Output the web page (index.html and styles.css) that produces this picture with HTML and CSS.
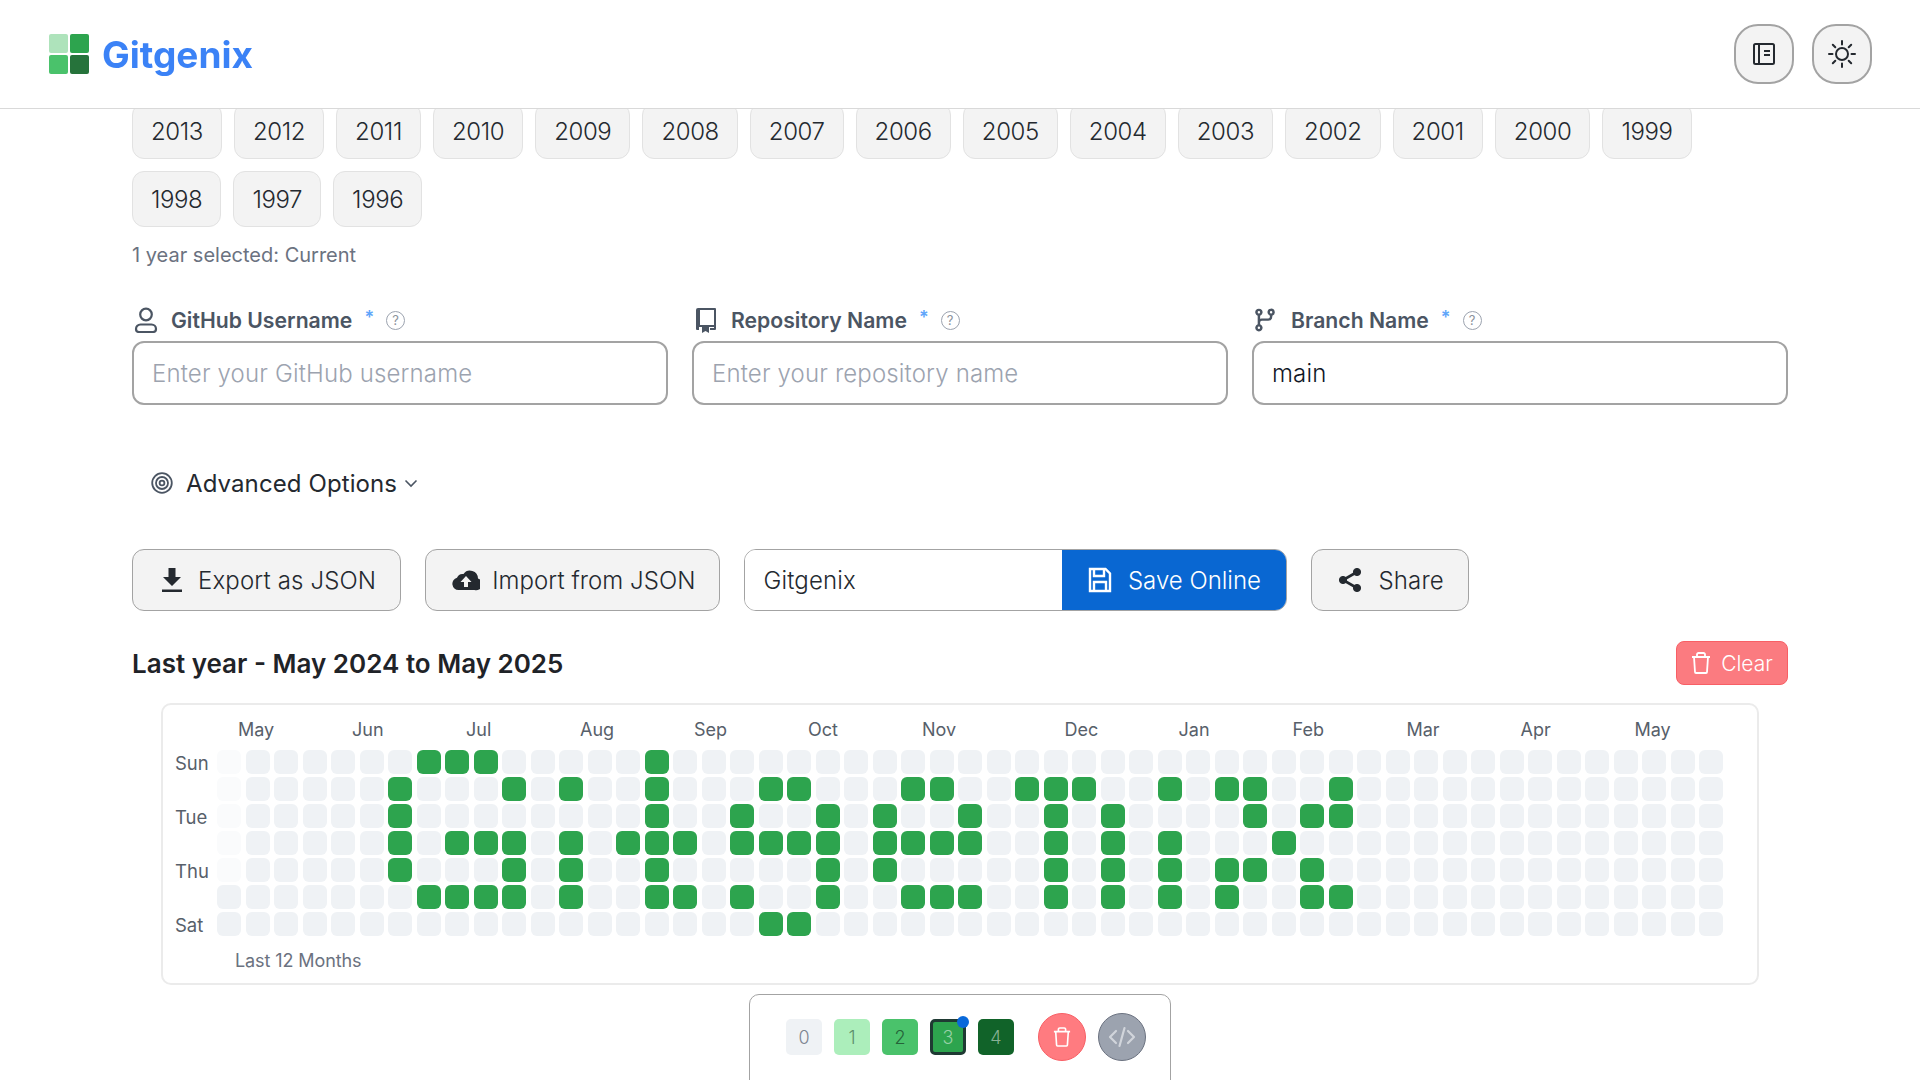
FILE: index.html
```html
<!DOCTYPE html>
<html lang="en">
<head>
  <meta charset="UTF-8" />
  <title>Gitgenix</title>
  <meta name="viewport" content="width=device-width, initial-scale=1.0" />
  <link rel="stylesheet" href="styles.css">
</head>
<body>

  <header class="topbar">
    <div class="brand">
      <div class="brand-mark">
        <span class="mark-a"></span><span class="mark-b"></span><span class="mark-c"></span><span class="mark-d"></span>
      </div>
      <span class="brand-name">Gitgenix</span>
    </div>
    <div class="topbar-actions">
      <button class="round-btn" aria-label="Guides">
        <svg width="24" height="24" viewBox="0 0 24 24" fill="none" stroke="#24292f" stroke-width="2"><rect x="2" y="2" width="20" height="20" rx="1.5"/><path d="M7 2v20M12 9h6M12 13h6"/></svg>
      </button>
      <button class="round-btn" aria-label="Theme">
        <svg width="28" height="28" viewBox="0 0 28 28" fill="none" stroke="#24292f" stroke-width="2" stroke-linecap="round"><circle cx="14" cy="14" r="6"/><path d="M14 1v3.5M14 23.5V27M1 14h3.5M23.5 14H27M4.8 4.8l2.5 2.5M20.7 20.7l2.5 2.5M4.8 23.2l2.5-2.5M20.7 7.3l2.5-2.5"/></svg>
      </button>
    </div>
  </header>

  <main class="page">
    <div class="years">
      <button class="year">2013</button>
      <button class="year">2012</button>
      <button class="year">2011</button>
      <button class="year">2010</button>
      <button class="year">2009</button>
      <button class="year">2008</button>
      <button class="year">2007</button>
      <button class="year">2006</button>
      <button class="year">2005</button>
      <button class="year">2004</button>
      <button class="year">2003</button>
      <button class="year">2002</button>
      <button class="year">2001</button>
      <button class="year">2000</button>
      <button class="year">1999</button>
      <button class="year">1998</button>
      <button class="year">1997</button>
      <button class="year">1996</button>
    </div>
    <p class="year-count">1 year selected: Current</p>

    <div class="fields">
      <div class="field">
        <label class="field-label">
          <svg class="field-icon" width="24" height="26" viewBox="0 0 24 26" fill="none" stroke="#4b5563" stroke-width="2.2"><circle cx="12" cy="7.5" r="5.8"/><path d="M2 22a4.500 4.500 0 0 1 4.500-4.500h11A4.500 4.500 0 0 1 22 22a3 3 0 0 1-3 3H5a3 3 0 0 1-3-3z"/></svg>
          <span>GitHub Username</span>
          <span class="req">*</span>
          <span class="help">?</span>
        </label>
        <input class="text-input" type="text" placeholder="Enter your GitHub username" />
      </div>
      <div class="field">
        <label class="field-label">
          <svg class="field-icon" width="24" height="26" viewBox="0 0 24 26" fill="none"><path d="M4 1h17a1 1 0 0 1 1 1v20a1 1 0 0 1-1 1h-5v-2h4V3H6v15h15v2H5v3H3a1 1 0 0 1-1-1V3a2 2 0 0 1 2-2z" fill="#4b5563"/><path d="M3 5h1.600v2H3zM3 9h1.600v2H3zM3 13h1.600v2H3z" fill="#4b5563"/><path d="M8 20h7v6l-3.500-2L8 26z" fill="#4b5563"/></svg>
          <span>Repository Name</span>
          <span class="req">*</span>
          <span class="help">?</span>
        </label>
        <input class="text-input" type="text" placeholder="Enter your repository name" />
      </div>
      <div class="field">
        <label class="field-label">
          <svg class="field-icon branch-icon" width="26" height="26" viewBox="0 0 16 16" fill="#4b5563"><path d="M9.500 3.250a2.250 2.250 0 1 1 3 2.122V6A2.500 2.500 0 0 1 10 8.500H6a1 1 0 0 0-1 1v1.128a2.251 2.251 0 1 1-1.500 0V5.372a2.250 2.250 0 1 1 1.500 0v1.836A2.493 2.493 0 0 1 6 7h4a1 1 0 0 0 1-1v-.628A2.250 2.250 0 0 1 9.500 3.250Zm-6 0a.75.75 0 1 0 1.500 0 .75.75 0 0 0-1.500 0Zm8.250-.75a.75.75 0 1 0 0 1.500.75.75 0 0 0 0-1.500ZM4.250 12a.75.75 0 1 0 0 1.500.75.75 0 0 0 0-1.500Z"/></svg>
          <span>Branch Name</span>
          <span class="req">*</span>
          <span class="help">?</span>
        </label>
        <input class="text-input" type="text" value="main" />
      </div>
    </div>

    <div class="advanced">
      <svg width="22" height="22" viewBox="0 0 22 22" fill="none" stroke="#4b5563" stroke-width="1.800"><circle cx="11" cy="11" r="9.800"/><circle cx="11" cy="11" r="6"/><circle cx="11" cy="11" r="2.400"/></svg>
      <span class="advanced-text">Advanced Options</span>
      <svg width="14" height="14" viewBox="0 0 14 14" fill="none" stroke="#4b5563" stroke-width="1.600"><path d="M1.500 4.500L7 10l5.500-5.500"/></svg>
    </div>

    <div class="actions">
      <button class="action-btn">
        <svg width="20" height="26" viewBox="0 0 20 26" fill="#24292f"><path d="M6.500 1h7v9H19l-9 9-9-9h5.500z"/><rect y="22.500" width="20" height="2.500"/></svg>
        Export as JSON
      </button>
      <button class="action-btn import-btn">
        <svg width="28" height="22" viewBox="0 0 28 22"><path d="M6.500 21A6.200 6.200 0 0 1 5 8.800 6 6 0 0 1 11.500 5 8 8 0 0 1 26 9.500 6 6 0 0 1 22.500 21z" fill="#24292f"/><path d="M14 7l5.500 6H16v5h-4v-5H8.500z" fill="#f3f3f3"/></svg>
        Import from JSON
      </button>
      <div class="save-group">
        <input class="save-input" type="text" value="Gitgenix" />
        <button class="save-btn">
          <svg width="24" height="26" viewBox="0 0 24 26" fill="none" stroke="#fff" stroke-width="2.400"><path d="M2 2h15.500L22 6.500V24H2z"/><path d="M6 2v7h10V2M6 24v-9h12v9"/></svg>
          Save Online
        </button>
      </div>
      <button class="action-btn share-btn">
        <svg width="24" height="26" viewBox="0 0 24 26" fill="#24292f" stroke="#24292f"><path d="M19 5L5 13l14 8" fill="none" stroke-width="2.600"/><circle cx="19" cy="5" r="3.600"/><circle cx="5" cy="13" r="3.600"/><circle cx="19" cy="21" r="3.600"/></svg>
        Share
      </button>
    </div>

    <div class="graph-head">
      <h2 class="graph-title">Last year - May 2024 to May 2025</h2>
      <button class="clear-btn">
        <svg width="20" height="22" viewBox="0 0 20 22" fill="none" stroke="#fff" stroke-width="1.800" stroke-linejoin="round"><path d="M1 5h18M6 5V2.500A1.500 1.500 0 0 1 7.500 1h5A1.500 1.500 0 0 1 14 2.500V5M3 5l1 15a1 1 0 0 0 1 1h10a1 1 0 0 0 1-1l1-15"/></svg>
        Clear
      </button>
    </div>

    <section class="graph-card">
      <div class="graph-grid" id="months"></div>
      <div class="graph-body">
        <div class="days">
          <span>Sun</span><span></span><span>Tue</span><span></span><span>Thu</span><span></span><span>Sat</span>
        </div>
        <div class="graph-grid cells" id="cells"></div>
      </div>
      <p class="graph-note">Last 12 Months</p>
    </section>

    <section class="palette">
      <button class="chip chip-0">0</button>
      <button class="chip chip-1">1</button>
      <button class="chip chip-2">2</button>
      <button class="chip chip-3 active">3</button>
      <button class="chip chip-4">4</button>
      <button class="tool-btn tool-erase" aria-label="Erase">
        <svg width="18" height="20" viewBox="0 0 20 22" fill="none" stroke="#fff" stroke-width="1.800" stroke-linejoin="round"><path d="M1 5h18M6 5V2.500A1.500 1.500 0 0 1 7.500 1h5A1.500 1.500 0 0 1 14 2.500V5M3 5l1 15a1 1 0 0 0 1 1h10a1 1 0 0 0 1-1l1-15"/></svg>
      </button>
      <button class="tool-btn tool-code" aria-label="Code">
        <svg width="28" height="22" viewBox="0 0 28 22" fill="none" stroke="#d1d5db" stroke-width="2.200" stroke-linecap="round" stroke-linejoin="round"><path d="M8 5l-6 6 6 6M20 5l6 6-6 6M16.500 2l-5 18"/></svg>
      </button>
    </section>
  </main>

  <script src="script.js"></script>
</body>
</html>
```

FILE: styles.css
```css
* {
  box-sizing: border-box;
}

html, body {
  height: 1080px;
  overflow: hidden;
}

body {
  margin: 0;
  background-color: #fff;
  color: #24292f;
  font-family: Inter, "Noto Sans", sans-serif;
  font-size: 24px;
}

button, input {
  font-family: inherit;
  font-size: inherit;
  font-weight: 350;
  color: inherit;
}

/* top bar sits over the scrolled page */
.topbar {
  position: fixed;
  top: 0;
  left: 0;
  right: 0;
  z-index: 10;
  height: 109px;
  padding: 0 48px 0 49px;
  display: flex;
  justify-content: space-between;
  align-items: center;
  background-color: rgba(255, 255, 255, 0.96);
  backdrop-filter: blur(10px);
  border-bottom: 1px solid #d9d9d9;
}

.brand {
  display: flex;
  align-items: center;
  gap: 13px;
}

.brand-mark {
  display: grid;
  grid-template-columns: 19px 19px;
  grid-template-rows: 19px 19px;
  gap: 2px;
}

.brand-mark span {
  border-radius: 2px;
}

.mark-a { background-color: #aee3bb; }
.mark-b { background-color: #2da44e; }
.mark-c { background-color: #4ac26b; }
.mark-d { background-color: #26733b; }

.brand-name {
  font-size: 37px;
  font-weight: 700;
  color: #3b82f6;
}

.topbar-actions {
  display: flex;
  gap: 18px;
}

.round-btn {
  width: 60px;
  height: 60px;
  padding: 0;
  display: flex;
  align-items: center;
  justify-content: center;
  background-color: #f3f3f3;
  border: 2px solid #a3a3a3;
  border-radius: 24px;
}

.page {
  padding: 103px 132px 0;
}

.years {
  display: flex;
  flex-wrap: wrap;
  gap: 12px;
}

.year {
  height: 56px;
  padding: 0 18px;
  background-color: #f3f3f3;
  border: 1px solid #e2e2e2;
  border-radius: 12px;
  letter-spacing: -0.4px;
}

.year-count {
  margin: 16px 0 0;
  font-size: 20px;
  line-height: 24px;
  color: #6b7280;
}

.fields {
  margin-top: 40px;
  display: flex;
  gap: 24px;
}

.field {
  flex: 1;
}

.field-label {
  height: 26px;
  margin-bottom: 8px;
  display: flex;
  align-items: center;
  font-size: 21.2px;
  font-weight: 600;
  color: #4b5563;
}

.field-icon {
  margin: 0 13px 0 2px;
}

.branch-icon {
  margin: 0 13px 0 0;
}

.req {
  margin-left: 12px;
  font-size: 18px;
  align-self: flex-start;
  color: #60a5fa;
}

.help {
  width: 19px;
  height: 19px;
  margin-left: 12px;
  display: flex;
  align-items: center;
  justify-content: center;
  font-size: 13px;
  font-weight: 400;
  color: #8b929c;
  border: 1.5px solid #9ca3af;
  border-radius: 50%;
}

.text-input {
  width: 100%;
  height: 64px;
  padding: 0 18px;
  color: #111827;
  background-color: #fff;
  border: 2px solid #a3a3a3;
  border-radius: 12px;
  letter-spacing: 0.15px;
}

.text-input::placeholder {
  color: #9ca3af;
}

.advanced {
  margin-top: 62px;
  padding-left: 19px;
  height: 32px;
  display: flex;
  align-items: center;
  gap: 13px;
}

.advanced-text {
  margin-right: -6px;
  letter-spacing: 0.1px;
}

.actions {
  margin-top: 50px;
  display: flex;
  gap: 24px;
}

.action-btn {
  height: 62px;
  padding: 0 24px 0 29px;
  display: flex;
  align-items: center;
  gap: 16px;
  background-color: #f3f3f3;
  border: 1px solid #a3a3a3;
  border-radius: 12px;
  letter-spacing: 0.15px;
}

.import-btn {
  padding-left: 26px;
  gap: 12px;
  letter-spacing: 0.05px;
}

.share-btn {
  padding-left: 26px;
}

.save-group {
  display: flex;
  height: 62px;
  width: 543px;
  border: 1px solid #a3a3a3;
  border-radius: 12px;
  overflow: hidden;
}

.save-input {
  flex: 1;
  min-width: 0;
  padding: 0 18px;
  border: 0;
  background-color: #fff;
  letter-spacing: 0.15px;
}

.save-btn {
  width: 224px;
  display: flex;
  align-items: center;
  justify-content: center;
  gap: 16px;
  color: #fff;
  background-color: #0967d2;
  border: 0;
}

.graph-head {
  margin-top: 30px;
  height: 44px;
  display: flex;
  justify-content: space-between;
  align-items: center;
}

.graph-title {
  margin: 0;
  font-size: 26px;
  font-weight: 600;
  color: #1f2328;
}

.clear-btn {
  width: 112px;
  height: 44px;
  padding: 0;
  display: flex;
  align-items: center;
  justify-content: center;
  gap: 10px;
  font-size: 21px;
  color: #fff;
  background-color: #fb7b80;
  border: 1px solid #f85f65;
  border-radius: 8px;
}

.graph-card {
  margin: 18px 29px 0;
  height: 282px;
  padding: 13px 12px 0;
  background-color: #fff;
  border: 2px solid #ebebeb;
  border-radius: 10px;
}

.graph-grid {
  margin-left: 42px;
  display: grid;
  grid-template-columns: repeat(53, 24px);
  column-gap: 4.5px;
  font-size: 18px;
  line-height: 24px;
  color: #57606a;
}

.graph-grid .month {
  padding-left: 21px;
  white-space: nowrap;
}

.graph-body {
  margin-top: 8px;
  display: flex;
}

.graph-body .graph-grid {
  margin-left: 0;
}

.days {
  width: 42px;
  margin-top: 1px;
  display: grid;
  grid-template-rows: repeat(7, 24px);
  row-gap: 3px;
  font-size: 18.5px;
  line-height: 24px;
  color: #57606a;
}

.cells {
  grid-template-rows: repeat(7, 24px);
  grid-auto-flow: column;
  row-gap: 3px;
}

.cell {
  border-radius: 6px;
  background-color: #eff2f5;
}

.cell.empty {
  background-color: #fafbfc;
}

.cell.on {
  background-color: #2da44e;
}

.graph-note {
  margin: 12px 0 0 60px;
  font-size: 18px;
  line-height: 24px;
  letter-spacing: -0.1px;
  color: #6b7280;
}

.palette {
  width: 422px;
  height: 120px;
  margin: 9px auto 0;
  padding: 18px 0 0 36px;
  display: flex;
  align-items: flex-start;
  background-color: #fff;
  border: 1px solid #a3a3a3;
  border-radius: 10px;
}

.chip {
  position: relative;
  width: 36px;
  height: 36px;
  margin: 6px 12px 0 0;
  padding: 0;
  font-size: 18px;
  border: 0;
  border-radius: 5px;
}

.chip-0 { background-color: #eff2f5; color: #7d8590; }
.chip-1 { background-color: #aceebb; color: #5c8f6b; }
.chip-2 { background-color: #4ac26b; color: #256339; }
.chip-3 { background-color: #2da44e; color: #97d1a6; }
.chip-4 { background-color: #116329; color: #88b194; margin-right: 24px; }

.chip.active {
  border: 3px solid #1f3a33;
}

/* blue dot on the picked level */
.chip.active::after {
  content: "";
  position: absolute;
  top: -6px;
  right: -6px;
  width: 12px;
  height: 12px;
  background-color: #0969da;
  border-radius: 50%;
}

.tool-btn {
  width: 48px;
  height: 48px;
  margin-right: 12px;
  padding: 0;
  display: flex;
  align-items: center;
  justify-content: center;
  border-radius: 50%;
}

.tool-erase {
  background-color: #ff7b80;
  border: 1px solid #f85f65;
}

.tool-code {
  background-color: #9ca3af;
  border: 1px solid #6b7280;
}
```

FILE: script.js
```js
// Columns that are lit, one list per weekday (Sun to Sat)
const lit = [
  [7, 8, 9, 15],
  [6, 10, 12, 15, 19, 20, 24, 25, 28, 29, 30, 33, 35, 36, 39],
  [6, 15, 18, 21, 23, 26, 29, 31, 36, 38, 39],
  [6, 8, 9, 10, 12, 14, 15, 16, 18, 19, 20, 21, 23, 24, 25, 26, 29, 31, 33, 37],
  [6, 10, 12, 15, 21, 23, 29, 31, 33, 35, 36, 38],
  [7, 8, 9, 10, 12, 15, 16, 18, 21, 24, 25, 26, 29, 31, 33, 35, 38, 39],
  [19, 20]
];

// Month label and the week column it starts on
const months = [
  ['May', 0], ['Jun', 4], ['Jul', 8], ['Aug', 12], ['Sep', 16], ['Oct', 20], ['Nov', 24],
  ['Dec', 29], ['Jan', 33], ['Feb', 37], ['Mar', 41], ['Apr', 45], ['May', 49]
];

const monthRow = document.getElementById('months');
months.forEach(([name, col], i) => {
  const el = document.createElement('span');
  el.className = 'month';
  el.textContent = name;
  const next = months[i + 1] ? months[i + 1][1] : 53;
  el.style.gridColumn = (col + 1) + ' / ' + (next + 1);
  monthRow.appendChild(el);
});

const cells = document.getElementById('cells');
for (let col = 0; col < 53; col++) {
  for (let row = 0; row < 7; row++) {
    const cell = document.createElement('div');
    cell.className = 'cell';
    if (lit[row].includes(col)) cell.classList.add('on');
    else if (col === 0 && row < 5) cell.classList.add('empty');
    cells.appendChild(cell);
  }
}
```
